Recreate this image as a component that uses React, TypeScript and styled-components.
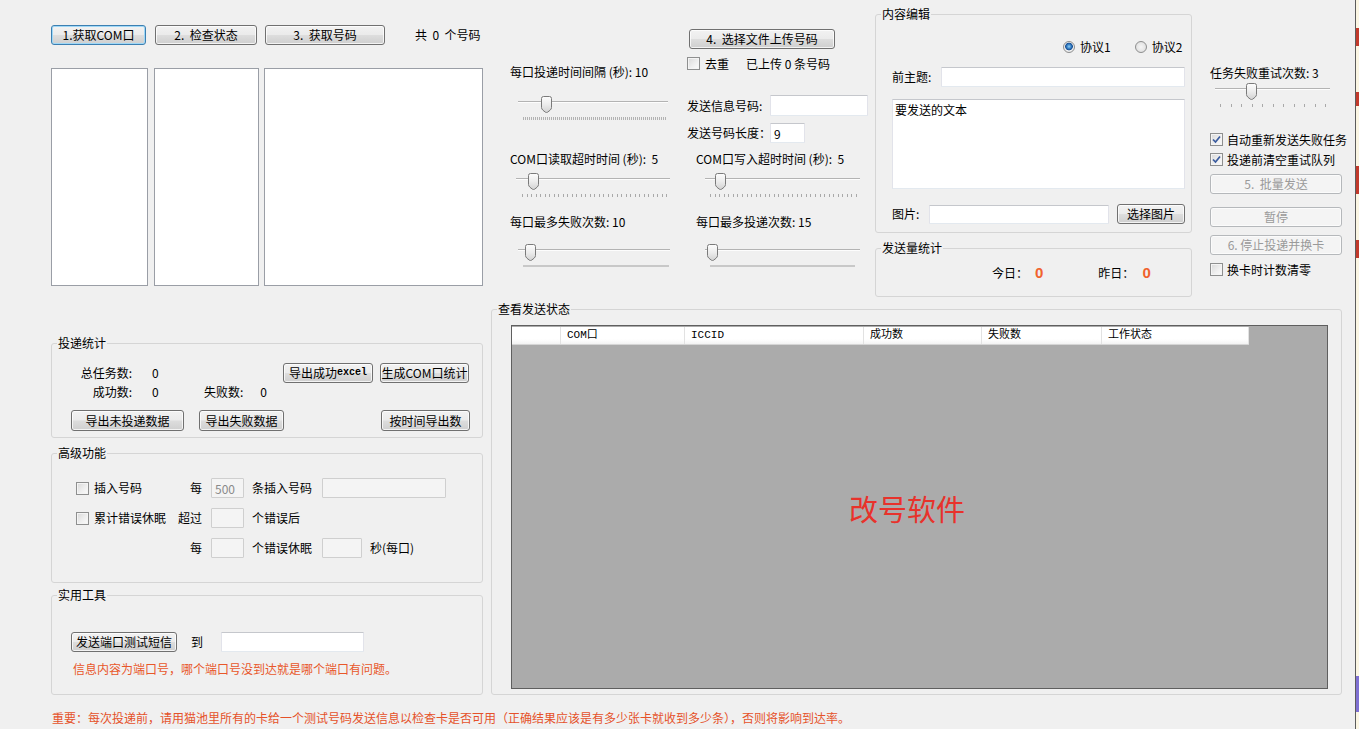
import React from "react";
import styled, { createGlobalStyle, css } from "styled-components";

const GlobalStyle = createGlobalStyle`
  html, body { margin: 0; padding: 0; background: #f0f0f0; }
  body {
    font-family: "Noto Sans CJK SC", "Microsoft YaHei", sans-serif;
    font-size: 12px;
    line-height: 14px;
    color: #000;
  }
  *, *::before, *::after { box-sizing: border-box; }
`;

/* ---------- window frame ---------- */

const Screen = styled.div`
  display: flex;
  width: 1359px;
  height: 729px;
  overflow: hidden;
  background: #f0f0f0;
`;

const Form = styled.div`
  width: 1355px;
  height: 729px;
  padding-left: 51px;
  display: flex;
  flex-direction: column;
`;

const DesktopEdge = styled.div`
  width: 4px;
  height: 729px;
  border-left: 1px solid #5c5c5c;
  background: linear-gradient(
    to bottom,
    #fbf6e3 0px, #fbf6e3 28px,
    #c23a2c 28px, #c23a2c 46px,
    #fbf6e3 46px, #fbf6e3 92px,
    #c23a2c 92px, #c23a2c 106px,
    #fbf6e3 106px, #fbf6e3 166px,
    #c23a2c 166px, #c23a2c 194px,
    #fbf6e3 194px, #fbf6e3 240px,
    #c23a2c 240px, #c23a2c 258px,
    #fbf6e3 258px, #fbf6e3 676px,
    #7f70d2 676px, #7f70d2 712px,
    #fbf6e3 712px
  );
`;

/* ---------- common controls ---------- */

const Button = styled.button<{ $w: number; $h?: number; $ml?: number; $mt?: number; $focused?: boolean }>`
  flex: none;
  width: ${(p) => p.$w}px;
  height: ${(p) => p.$h ?? 20}px;
  margin: ${(p) => p.$mt ?? 0}px 0 0 ${(p) => p.$ml ?? 0}px;
  padding: 0;
  display: flex;
  align-items: center;
  justify-content: center;
  font-family: inherit;
  font-size: 12px;
  line-height: 14px;
  color: #000;
  white-space: nowrap;
  border: 1px solid #707070;
  border-radius: 3px;
  background: linear-gradient(to bottom, #f2f2f2 0%, #ebebeb 48%, #dddddd 52%, #cfcfcf 100%);
  box-shadow: inset 0 0 0 1px rgba(255, 255, 255, 0.75);
  ${(p) =>
    p.$focused &&
    css`
      border-color: #3c7fb1;
      box-shadow: inset 0 0 0 1px #9fd8f7;
    `}
  &:disabled {
    color: #9a9a9a;
    border-color: #b5b8bb;
    background: #f4f4f4;
    box-shadow: inset 0 0 0 1px #fbfbfb;
  }
`;

const Mono = styled.span`
  font-family: "Liberation Mono", monospace;
  font-size: 10px;
  font-weight: bold;
`;

const TextBox = styled.input<{ $w: number; $h?: number; $ml?: number; $off?: boolean }>`
  flex: none;
  width: ${(p) => p.$w}px;
  height: ${(p) => p.$h ?? 20}px;
  margin: 0 0 0 ${(p) => p.$ml ?? 0}px;
  padding: 0 3px;
  font-family: inherit;
  font-size: 12px;
  color: #000;
  background: #fff;
  border: 1px solid;
  border-color: #c5c7cc #e2e3ea #e3e9ef #e2e3ea;
  border-radius: 1px;
  outline: none;
  ${(p) =>
    p.$off &&
    css`
      background: #f4f4f4;
      color: #8a8a8a;
      border-color: #cfcfcf;
    `}
`;

const TextArea = styled.textarea`
  display: block;
  width: 293px;
  height: 90px;
  margin-top: 12px;
  padding: 3px 2px;
  resize: none;
  font-family: inherit;
  font-size: 12px;
  line-height: 14px;
  color: #000;
  background: #fff;
  border: 1px solid;
  border-color: #c5c7cc #e2e3ea #e3e9ef #e2e3ea;
  outline: none;
  overflow: hidden;
`;

const Text = styled.span<{ $ml?: number }>`
  flex: none;
  margin-left: ${(p) => p.$ml ?? 0}px;
  white-space: pre;
  line-height: 14px;
`;

const FieldName = styled.span<{ $w: number; $right?: boolean; $pl?: number }>`
  flex: none;
  width: ${(p) => p.$w}px;
  padding-left: ${(p) => p.$pl ?? 0}px;
  white-space: nowrap;
  text-align: ${(p) => (p.$right ? "right" : "left")};
`;

const Line = styled.div<{ $mt?: number; $pl?: number; $h?: number }>`
  display: flex;
  align-items: center;
  height: ${(p) => p.$h ?? 20}px;
  margin-top: ${(p) => p.$mt ?? 0}px;
  padding-left: ${(p) => p.$pl ?? 0}px;
`;

const Box = styled.span`
  flex: none;
  width: 13px;
  height: 13px;
  display: inline-flex;
  align-items: center;
  justify-content: center;
  border: 1px solid #8e8f8f;
  background: linear-gradient(135deg, #d8d8d8 0%, #f0f0f0 60%, #fbfbfb 100%);
  box-shadow: inset 0 0 0 1px #f4f4f4;
`;

function CheckBox({ checked }: { checked?: boolean }) {
  return (
    <Box>
      {checked && (
        <svg width="11" height="11" viewBox="0 0 11 11">
          <path d="M2 5.5 L4.5 8 L9 2.5" fill="none" stroke="#3b5c9e" strokeWidth="1.7" />
        </svg>
      )}
    </Box>
  );
}

const RadioDot = styled.span<{ $on?: boolean; $ml?: number }>`
  flex: none;
  width: 12px;
  height: 12px;
  margin-left: ${(p) => p.$ml ?? 0}px;
  border-radius: 50%;
  border: 1px solid #8e8f8f;
  background: ${(p) =>
    p.$on
      ? "radial-gradient(circle at 50% 45%, #8fd0f6 0, #2b73bb 2.5px, #1c4f8f 3.5px, #f2f2f2 4.2px, #dadada 100%)"
      : "radial-gradient(circle at 50% 50%, #f5f5f5 0, #e8e8e8 50%, #d4d4d4 100%)"};
`;

/* ---------- trackbar ---------- */

const SliderBox = styled.div<{ $mt: number }>`
  margin-top: ${(p) => p.$mt}px;
  display: flex;
  flex-direction: column;
`;

const TrackArea = styled.div<{ $mt: number; $ml: number; $w: number }>`
  position: relative;
  margin: ${(p) => p.$mt}px 0 0 ${(p) => p.$ml}px;
  width: ${(p) => p.$w}px;
  height: 18px;
  padding-top: 5px;
`;

const TrackLine = styled.div`
  height: 2px;
  border-top: 1px solid #b3b3b3;
  border-bottom: 1px solid #fdfdfd;
`;

const Thumb = styled.svg`
  position: absolute;
  top: 0;
  display: block;
`;

const TickBand = styled.div<{ $ml: number; $w: number; $kind: "dense" | "bar" | "count" }>`
  display: flex;
  justify-content: space-between;
  margin: 3px 0 0 ${(p) => p.$ml}px;
  width: ${(p) => p.$w}px;
  height: 3px;
  ${(p) =>
    p.$kind === "dense" &&
    css`
      background: repeating-linear-gradient(to right, #b2b2b2 0 1px, transparent 1px 2px);
    `}
  ${(p) =>
    p.$kind === "bar" &&
    css`
      height: 2px;
      background: #c8c8c8;
    `}
`;

const Tick = styled.span`
  width: 1px;
  height: 3px;
  background: #a9a9a9;
`;

type SliderProps = {
  label: string;
  labelGap: number;
  trackGap: number;
  trackLeft: number;
  trackWidth: number;
  value: number;
  max: number;
  tickLeft: number;
  tickWidth: number;
  ticks: "dense" | "bar" | number;
};

function Slider(p: SliderProps) {
  const left = Math.round(((p.trackWidth - 11) * p.value) / p.max);
  const kind = typeof p.ticks === "number" ? "count" : p.ticks;
  return (
    <SliderBox $mt={p.labelGap}>
      <Text>{p.label}</Text>
      <TrackArea $mt={p.trackGap} $ml={p.trackLeft} $w={p.trackWidth}>
        <TrackLine />
        <Thumb width="11" height="17" viewBox="0 0 11 17" style={{ left }}>
          <defs>
            <linearGradient id="thumbFill" x1="0" y1="0" x2="0" y2="1">
              <stop offset="0" stopColor="#fdfdfd" />
              <stop offset="0.5" stopColor="#ececec" />
              <stop offset="1" stopColor="#d2d2d2" />
            </linearGradient>
          </defs>
          <path
            d="M0.5 2.5 Q0.5 0.5 2.5 0.5 H8.5 Q10.5 0.5 10.5 2.5 V11.5 Q10.5 13 9 14.3 L6.6 16.2 Q5.5 16.9 4.4 16.2 L2 14.3 Q0.5 13 0.5 11.5 Z"
            fill="url(#thumbFill)"
            stroke="#7a7a7a"
          />
        </Thumb>
      </TrackArea>
      <TickBand $ml={p.tickLeft} $w={p.tickWidth} $kind={kind}>
        {typeof p.ticks === "number" && Array.from({ length: p.ticks }, (_, i) => <Tick key={i} />)}
      </TickBand>
    </SliderBox>
  );
}

/* ---------- group boxes ---------- */

const Group = styled.fieldset<{ $w: number; $h: number; $mt?: number; $ml?: number }>`
  flex: none;
  width: ${(p) => p.$w}px;
  height: ${(p) => p.$h}px;
  margin: ${(p) => p.$mt ?? 0}px 0 0 ${(p) => p.$ml ?? 0}px;
  padding: 0;
  min-width: 0;
  border: 1px solid #d5d5d5;
  border-radius: 3px;
`;

const Caption = styled.legend`
  margin-left: 5px;
  padding: 0 1px;
  font-size: 12px;
  line-height: 14px;
  color: #000;
`;

/* ---------- top area ---------- */

const TopArea = styled.div`
  display: flex;
  align-items: flex-start;
  height: 300px;
`;

const PortColumn = styled.div`
  width: 432px;
  padding-top: 25px;
`;

const ListRow = styled.div`
  display: flex;
  margin-top: 23px;
  height: 218px;
`;

const ListBox = styled.div<{ $w: number; $ml?: number }>`
  width: ${(p) => p.$w}px;
  margin-left: ${(p) => p.$ml ?? 0}px;
  height: 100%;
  background: #fff;
  border: 1px solid #9a9ea6;
`;

const SettingsColumn = styled.div`
  width: 360px;
  margin-left: 27px;
  display: flex;
  flex-direction: column;
`;

const SettingsRow = styled.div<{ $h?: number }>`
  display: flex;
  align-items: flex-start;
  ${(p) => p.$h !== undefined && `height: ${p.$h}px;`}
`;

const SettingsCell = styled.div<{ $w: number; $pt?: number }>`
  flex: none;
  width: ${(p) => p.$w}px;
  padding-top: ${(p) => p.$pt ?? 0}px;
  display: flex;
  flex-direction: column;
`;

const ContentColumn = styled.div`
  width: 317px;
  margin-left: 5px;
  display: flex;
  flex-direction: column;
`;

const EditorBody = styled.div`
  padding-left: 16px;
`;

const Count = styled.span<{ $ml: number }>`
  margin-left: ${(p) => p.$ml}px;
  font-family: Arial, "Liberation Sans", sans-serif;
  font-size: 15px;
  font-weight: bold;
  color: #f0622d;
  line-height: 16px;
`;

const RetryColumn = styled.div`
  width: 132px;
  margin-left: 18px;
  padding-top: 66px;
  display: flex;
  flex-direction: column;
`;

/* ---------- bottom area ---------- */

const BottomArea = styled.div`
  display: flex;
  align-items: flex-start;
`;

const ToolColumn = styled.div`
  width: 432px;
  display: flex;
  flex-direction: column;
`;

const StatsBody = styled.div`
  padding: 0 13px 0 0;
`;

const AdvancedGrid = styled.div`
  display: grid;
  grid-template-columns: 102px 33px 33px 78px 130px;
  grid-template-rows: 20px 20px 20px;
  row-gap: 10px;
  align-items: center;
  margin-top: 18px;
  padding-left: 24px;
`;

const CheckLabel = styled.div`
  display: flex;
  align-items: center;
  gap: 5px;
  white-space: nowrap;
`;

const CellText = styled.span<{ $right?: boolean; $pl?: number; $pr?: number }>`
  white-space: nowrap;
  text-align: ${(p) => (p.$right ? "right" : "left")};
  padding-left: ${(p) => p.$pl ?? 0}px;
  padding-right: ${(p) => p.$pr ?? 0}px;
`;

const CellFlex = styled.div`
  display: flex;
  align-items: center;
`;

const Hint = styled.div<{ $mt: number; $pl: number }>`
  margin-top: ${(p) => p.$mt}px;
  padding-left: ${(p) => p.$pl}px;
  line-height: 14px;
  color: #e8572a;
  white-space: nowrap;
`;

const StatusGroupBody = styled.div`
  padding-left: 19px;
  padding-top: 9px;
`;

const DataGrid = styled.div`
  position: relative;
  width: 817px;
  height: 364px;
  padding-top: 1px;
  background: #ababab;
  border: 1px solid #5f5f5f;
`;

const HeaderRow = styled.div`
  display: flex;
  height: 18px;
  width: 737px;
  background: linear-gradient(to bottom, #ffffff 0%, #ffffff 70%, #f3f3f3 100%);
  border-bottom: 1px solid #d5d5d5;
`;

const HeaderCell = styled.div<{ $w: number }>`
  flex: none;
  width: ${(p) => p.$w}px;
  padding-left: 6px;
  border-right: 1px solid #e2e2e2;
  line-height: 17px;
  font-family: "Liberation Mono", "Noto Sans CJK SC", monospace;
  font-size: 11px;
  white-space: nowrap;
`;

const Watermark = styled.div`
  position: absolute;
  left: 337px;
  top: 165px;
  font-size: 29px;
  line-height: 34px;
  color: #e8322b;
  white-space: nowrap;
`;

const Notice = styled.div`
  margin-top: 16px;
  padding-left: 1px;
  line-height: 14px;
  color: #e5522a;
  white-space: nowrap;
`;

/* ---------- page ---------- */

const columns = [
  { name: "", w: 49 },
  { name: "COM口", w: 124 },
  { name: "ICCID", w: 179 },
  { name: "成功数", w: 118 },
  { name: "失败数", w: 120 },
  { name: "工作状态", w: 147 },
];

export default function App() {
  return (
    <>
      <GlobalStyle />
      <Screen>
        <Form>
          <TopArea>
            <PortColumn>
              <Line>
                <Button $w={95} $focused>
                  1.获取COM口
                </Button>
                <Button $w={102} $ml={9}>
                  2.&nbsp; 检查状态
                </Button>
                <Button $w={120} $ml={8}>
                  3.&nbsp; 获取号码
                </Button>
                <Text $ml={30}>共  0  个号码</Text>
              </Line>
              <ListRow>
                <ListBox $w={97} />
                <ListBox $w={105} $ml={6} />
                <ListBox $w={219} $ml={5} />
              </ListRow>
            </PortColumn>

            <SettingsColumn>
              <SettingsRow $h={150}>
                <SettingsCell $w={177}>
                  <Slider
                    label="每口投递时间间隔 (秒): 10"
                    labelGap={65}
                    trackGap={17}
                    trackLeft={8}
                    trackWidth={150}
                    value={10}
                    max={60}
                    tickLeft={13}
                    tickWidth={144}
                    ticks="dense"
                  />
                </SettingsCell>
                <SettingsCell $w={183} $pt={29}>
                  <Button $w={146} $ml={2}>
                    4.&nbsp; 选择文件上传号码
                  </Button>
                  <Line $mt={8} $h={13}>
                    <CheckBox />
                    <Text $ml={5}>去重</Text>
                    <Text $ml={17}>已上传 0 条号码</Text>
                  </Line>
                  <Line $mt={25} $h={21}>
                    <FieldName $w={83}>发送信息号码:</FieldName>
                    <TextBox $w={98} $h={21} readOnly defaultValue="" />
                  </Line>
                  <Line $mt={7}>
                    <FieldName $w={83}>发送号码长度：</FieldName>
                    <TextBox $w={35} readOnly defaultValue="9" />
                  </Line>
                </SettingsCell>
              </SettingsRow>

              <SettingsRow>
                <SettingsCell $w={186}>
                  <Slider
                    label="COM口读取超时时间 (秒):  5"
                    labelGap={2}
                    trackGap={7}
                    trackLeft={6}
                    trackWidth={154}
                    value={5}
                    max={60}
                    tickLeft={12}
                    tickWidth={145}
                    ticks={33}
                  />
                </SettingsCell>
                <SettingsCell $w={174}>
                  <Slider
                    label="COM口写入超时时间 (秒):  5"
                    labelGap={2}
                    trackGap={7}
                    trackLeft={9}
                    trackWidth={155}
                    value={5}
                    max={70}
                    tickLeft={14}
                    tickWidth={147}
                    ticks={33}
                  />
                </SettingsCell>
              </SettingsRow>

              <SettingsRow>
                <SettingsCell $w={186}>
                  <Slider
                    label="每口最多失败次数: 10"
                    labelGap={18}
                    trackGap={15}
                    trackLeft={8}
                    trackWidth={152}
                    value={10}
                    max={200}
                    tickLeft={13}
                    tickWidth={146}
                    ticks="bar"
                  />
                </SettingsCell>
                <SettingsCell $w={174}>
                  <Slider
                    label="每口最多投递次数: 15"
                    labelGap={18}
                    trackGap={15}
                    trackLeft={9}
                    trackWidth={155}
                    value={15}
                    max={1000}
                    tickLeft={14}
                    tickWidth={145}
                    ticks="bar"
                  />
                </SettingsCell>
              </SettingsRow>
            </SettingsColumn>

            <ContentColumn>
              <Group $w={317} $h={226} $mt={7}>
                <Caption>内容编辑</Caption>
                <EditorBody>
                  <Line $mt={20} $pl={171} $h={12}>
                    <RadioDot $on />
                    <Text $ml={5}>协议1</Text>
                    <RadioDot $ml={24} />
                    <Text $ml={5}>协议2</Text>
                  </Line>
                  <Line $mt={14}>
                    <FieldName $w={49}>前主题:</FieldName>
                    <TextBox $w={244} readOnly defaultValue="" />
                  </Line>
                  <TextArea readOnly defaultValue="要发送的文本" />
                  <Line $mt={15}>
                    <FieldName $w={37}>图片:</FieldName>
                    <TextBox $w={180} $h={19} readOnly defaultValue="" />
                    <Button $w={68} $ml={8}>
                      选择图片
                    </Button>
                  </Line>
                </EditorBody>
              </Group>
              <Group $w={317} $h={56} $mt={8}>
                <Caption>发送量统计</Caption>
                <Line $mt={10} $pl={116} $h={16}>
                  <Text>今日：</Text>
                  <Count $ml={7}>0</Count>
                  <Text $ml={55}>昨日：</Text>
                  <Count $ml={8}>0</Count>
                </Line>
              </Group>
            </ContentColumn>

            <RetryColumn>
              <Slider
                label="任务失败重试次数: 3"
                labelGap={0}
                trackGap={3}
                trackLeft={5}
                trackWidth={115}
                value={3}
                max={10}
                tickLeft={10}
                tickWidth={106}
                ticks={11}
              />
              <Line $mt={26} $h={13}>
                <CheckBox checked />
                <Text $ml={4}>自动重新发送失败任务</Text>
              </Line>
              <Line $mt={7} $h={13}>
                <CheckBox checked />
                <Text $ml={4}>投递前清空重试队列</Text>
              </Line>
              <Button $w={132} $mt={8} disabled>
                5.&nbsp; 批量发送
              </Button>
              <Button $w={132} $mt={13} disabled>
                暂停
              </Button>
              <Button $w={132} $mt={8} disabled>
                6. 停止投递并换卡
              </Button>
              <Line $mt={8} $h={13}>
                <CheckBox />
                <Text $ml={4}>换卡时计数清零</Text>
              </Line>
            </RetryColumn>
          </TopArea>

          <BottomArea>
            <ToolColumn>
              <Group $w={432} $h={102} $mt={36}>
                <Caption>投递统计</Caption>
                <StatsBody>
                  <Line $mt={13}>
                    <FieldName $w={80} $right>
                      总任务数:
                    </FieldName>
                    <Text $ml={20}>0</Text>
                    <Button $w={90} style={{ marginLeft: "auto" }}>
                      导出成功<Mono>excel</Mono>
                    </Button>
                    <Button $w={89} $ml={7}>
                      生成COM口统计
                    </Button>
                  </Line>
                  <Line $mt={2} $h={14}>
                    <FieldName $w={80} $right>
                      成功数:
                    </FieldName>
                    <FieldName $w={72} $pl={20}>
                      0
                    </FieldName>
                    <Text>失败数:</Text>
                    <Text $ml={17}>0</Text>
                  </Line>
                  <Line $mt={11} $pl={19} $h={21}>
                    <Button $w={113} $h={21}>
                      导出未投递数据
                    </Button>
                    <Button $w={85} $h={21} $ml={15}>
                      导出失败数据
                    </Button>
                    <Button $w={89} $h={21} $ml={97}>
                      按时间导出数
                    </Button>
                  </Line>
                </StatsBody>
              </Group>

              <Group $w={432} $h={137} $mt={8}>
                <Caption>高级功能</Caption>
                <AdvancedGrid>
                  <CheckLabel>
                    <CheckBox />
                    <span>插入号码</span>
                  </CheckLabel>
                  <CellText $right $pr={9}>
                    每
                  </CellText>
                  <TextBox $w={33} $off readOnly defaultValue="500" />
                  <CellText $pl={8}>条插入号码</CellText>
                  <TextBox $w={124} $off readOnly defaultValue="" />

                  <CheckLabel>
                    <CheckBox />
                    <span>累计错误休眠</span>
                  </CheckLabel>
                  <CellText $right $pr={9}>
                    超过
                  </CellText>
                  <TextBox $w={33} $off readOnly defaultValue="" />
                  <CellText $pl={8}>个错误后</CellText>
                  <span />

                  <span />
                  <CellText $right $pr={9}>
                    每
                  </CellText>
                  <TextBox $w={33} $off readOnly defaultValue="" />
                  <CellText $pl={8}>个错误休眠</CellText>
                  <CellFlex>
                    <TextBox $w={40} $off readOnly defaultValue="" />
                    <Text $ml={8}>秒(每口)</Text>
                  </CellFlex>
                </AdvancedGrid>
              </Group>

              <Group $w={432} $h={107} $mt={5}>
                <Caption>实用工具</Caption>
                <Line $mt={30} $pl={19}>
                  <Button $w={106}>发送端口测试短信</Button>
                  <Text $ml={14}>到</Text>
                  <TextBox $w={143} $ml={18} readOnly defaultValue="" />
                </Line>
                <Hint $mt={10} $pl={21}>
                  信息内容为端口号，哪个端口号没到达就是哪个端口有问题。
                </Hint>
              </Group>
            </ToolColumn>

            <Group $w={851} $h={393} $mt={2} $ml={8}>
              <Caption>查看发送状态</Caption>
              <StatusGroupBody>
                <DataGrid>
                  <HeaderRow>
                    {columns.map((c) => (
                      <HeaderCell key={c.name || "row"} $w={c.w}>
                        {c.name}
                      </HeaderCell>
                    ))}
                  </HeaderRow>
                  <Watermark>改号软件</Watermark>
                </DataGrid>
              </StatusGroupBody>
            </Group>
          </BottomArea>

          <Notice>
            重要：每次投递前，请用猫池里所有的卡给一个测试号码发送信息以检查卡是否可用（正确结果应该是有多少张卡就收到多少条），否则将影响到达率。
          </Notice>
        </Form>
        <DesktopEdge />
      </Screen>
    </>
  );
}
